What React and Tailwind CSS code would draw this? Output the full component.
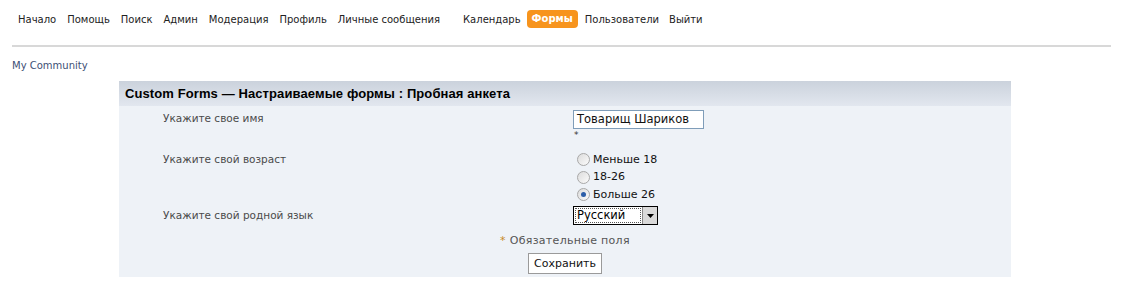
import React from 'react'

const navItems = ['Начало', 'Помощь', 'Поиск', 'Админ', 'Модерация', 'Профиль', 'Личные сообщения']
const navItems2 = ['Пользователи', 'Выйти']

function Radio({ checked, label }) {
	return (
		<div className="flex items-center h-[17.5px]">
			<span className="ml-[4px] w-[13px] h-[13px] rounded-full border border-[#a8a8a8] bg-gradient-to-br from-[#dcdcdc] to-[#fbfbfb] flex items-center justify-center">
				{checked && <span className="w-[5px] h-[5px] rounded-full bg-[#2d5ea8]" />}
			</span>
			<span className="ml-[3px] text-[11px] text-[#111]">{label}</span>
		</div>
	)
}

export default function App() {
	return (
		<div className="px-[12px] bg-white min-h-[285px] text-[10px] text-[#222]" style={{ fontFamily: '"DejaVu Sans", Verdana, sans-serif' }}>
			<div className="flex items-center h-[37px] pl-[6px] pt-[1px]">
				{navItems.map((item) => (
					<span key={item} className="mr-[11px]">{item}</span>
				))}
				<span className="ml-[12px] mr-[6px]">Календарь</span>
				<span className="bg-[#f7941d] text-white font-bold rounded-[4px] px-[5px] h-[18px] leading-[18px] mr-[7px]">Формы</span>
				{navItems2.map((item) => (
					<span key={item} className="mr-[10px]">{item}</span>
				))}
			</div>
			<div className="mt-[8px] h-[2px] bg-[#d8d8d8]" />
			<div className="mt-[11px] text-[#3d4f75]">My Community</div>

			<div className="ml-[107px] w-[892px] mt-[8px] bg-[#eef2f7]">
				<div className="h-[25px] bg-gradient-to-b from-[#cbd2dc] to-[#e2e7ef] pl-[6px] flex items-center font-bold text-[13px] tracking-[0.1px] text-black" style={{ fontFamily: '"Liberation Sans", Arial, sans-serif' }}>
					Custom Forms — Настраиваемые формы : Пробная анкета
				</div>

				<div className="grid grid-cols-2 text-[10.5px] text-[#4a4a4a]">
					<div className="pl-[44px] pt-[5px] h-[40px]">Укажите свое имя</div>
					<div className="pl-[8px] pt-[4px]">
						<div className="w-[131px] h-[19px] border border-[#7f9db9] bg-white text-[11.5px] text-[#111] pl-[3px] leading-[17px]">Товарищ Шариков</div>
						<div className="text-[9px] leading-[9px] text-[#333] pl-[1px] mt-[2px]">*</div>
					</div>

					<div className="pl-[44px] pt-[6px] h-[58px]">Укажите свой возраст</div>
					<div className="pl-[8px] pt-[5px]">
						<Radio label="Меньше 18" />
						<Radio label="18-26" />
						<Radio checked label="Больше 26" />
					</div>

					<div className="pl-[44px] pt-[4px] h-[27px]">Укажите свой родной язык</div>
					<div className="pl-[8px] pt-[2px]">
						<div className="w-[85px] h-[19px] border border-black bg-white flex items-center">
							<span className="flex-1 pl-[3px] text-[11.5px] text-black leading-[17px] outline outline-1 outline-dotted outline-[#555] -outline-offset-2">Русский</span>
							<span className="w-[15px] h-[17px] bg-[#d9d9d9] border-l border-[#888] flex items-center justify-center">
								<svg width="7" height="4" viewBox="0 0 7 4"><path d="M0 0h7L3.5 4z" fill="#000" /></svg>
							</span>
						</div>
					</div>
				</div>

				<div className="text-center text-[11px] tracking-[0.3px] text-[#555] mt-[2px] h-[17px]">
					<span className="text-[#c7891e]">*</span> Обязательные поля
				</div>
				<div className="flex justify-center pt-[3px] pb-[3px]">
					<div className="h-[21px] px-[5px] border border-[#9a9a9a] bg-white text-[11px] text-[#111] leading-[19px]">Сохранить</div>
				</div>
			</div>
		</div>
	)
}
